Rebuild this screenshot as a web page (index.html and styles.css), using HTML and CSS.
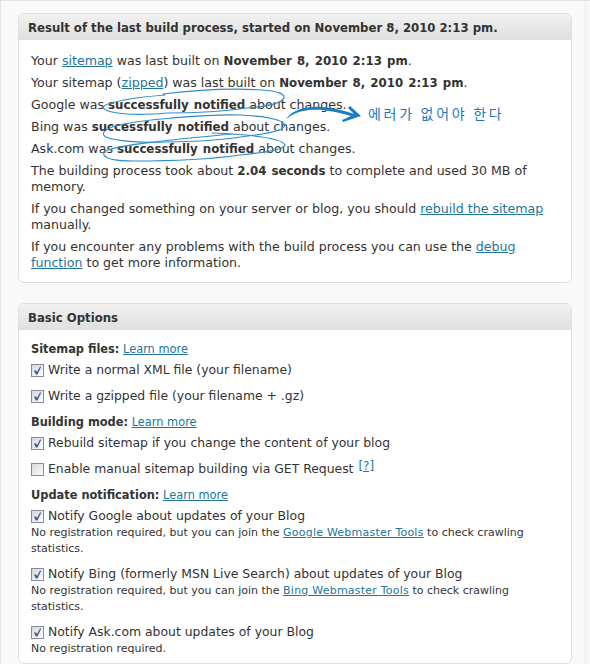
FILE: index.html
```html
<!DOCTYPE html>
<html lang="en">
<head>
<meta charset="utf-8">
<title>Sitemap options</title>
<link rel="stylesheet" href="styles.css">
</head>
<body>
<div class="page">
  <section class="panel">
    <h3 class="panel-title">Result of the last build process, started on November 8, 2010 2:13 pm.</h3>
    <div class="panel-body result">
      <p>Your <a href="#">sitemap</a> was last built on <b>November 8, 2010 2:13 pm</b>.</p>
      <p>Your sitemap (<a href="#">zipped</a>) was last built on <b>November 8, 2010 2:13 pm</b>.</p>
      <p>Google was <b>successfully notified</b> about changes.</p>
      <p>Bing was <b>successfully notified</b> about changes.</p>
      <p>Ask.com was <b>successfully notified</b> about changes.</p>
      <p>The building process took about <b>2.04 seconds</b> to complete and used 30 MB of memory.</p>
      <p>If you changed something on your server or blog, you should <a href="#">rebuild the sitemap</a> manually.</p>
      <p>If you encounter any problems with the build process you can use the <a href="#">debug function</a> to get more information.</p>
    </div>
  </section>
  <section class="panel">
    <h3 class="panel-title">Basic Options</h3>
    <div class="panel-body options">
      <h4 class="group"><b>Sitemap files:</b> <a href="#">Learn more</a></h4>
      <label class="opt"><input type="checkbox" checked>Write a normal XML file (your filename)</label>
      <label class="opt"><input type="checkbox" checked>Write a gzipped file (your filename + .gz)</label>
      <h4 class="group"><b>Building mode:</b> <a href="#">Learn more</a></h4>
      <label class="opt"><input type="checkbox" checked>Rebuild sitemap if you change the content of your blog</label>
      <label class="opt"><input type="checkbox">Enable manual sitemap building via GET Request <a href="#" class="help">[?]</a></label>
      <h4 class="group"><b>Update notification:</b> <a href="#">Learn more</a></h4>
      <label class="opt tight"><input type="checkbox" checked>Notify Google about updates of your Blog</label>
      <p class="note">No registration required, but you can join the <a href="#">Google Webmaster Tools</a> to check crawling statistics.</p>
      <label class="opt tight"><input type="checkbox" checked>Notify Bing (formerly MSN Live Search) about updates of your Blog</label>
      <p class="note">No registration required, but you can join the <a href="#">Bing Webmaster Tools</a> to check crawling statistics.</p>
      <label class="opt tight"><input type="checkbox" checked>Notify Ask.com about updates of your Blog</label>
      <p class="note">No registration required.</p>
    </div>
  </section>
</div>
<svg class="scribble" viewBox="0 0 590 664" aria-hidden="true">
  <g fill="none" stroke="#2f8ccb" stroke-width="1.2" stroke-linecap="round">
    <path d="M163 94 C195 90 235 88 262 90 C278 91 285 94 284 98 C281 104 262 107 247 108 C220 112 190 113 167 113 C145 115 125 115 112 112 C103 110 102 107 104 106 C110 102 130 98 165 95"/>
    <path d="M170 118 C195 116 220 114 240 115 C265 116 284 120 285 125 C285 130 270 133 255 135 C230 139 195 142 167 142 C140 143 115 141 106 137 C102 135 103 132 106 130 C115 124 140 120 200 116"/>
    <path d="M212 133 C245 134 283 138 285 145 C285 150 260 153 240 155 C205 160 165 161 133 161 C118 161 106 159 104 155 C103 152 105 151 108 150 C125 144 170 140 232 134"/>
  </g>
  <path class="arrow" d="M286 119 C293 109 308 106 322 107 C336 108 349 112 354 114 L348 108 L350 106 L361 116 L343 122 L342 120 L351 116 C341 113 332 111 322 110 C308 109 296 111 286 119 Z"/>
</svg>
<span class="handnote">에러가 없어야 한다</span>
</body>
</html>
```
FILE: styles.css
```css
html, body { margin: 0; padding: 0; }
body {
  width: 590px;
  height: 664px;
  overflow: hidden;
  position: relative;
  background: linear-gradient(to right, #f9f9f9 584px, #ececec 585px, #f6f6f6 586px);
  font-family: "DejaVu Sans", Verdana, sans-serif;
  font-size: 12.4px;
  color: #333;
  box-sizing: border-box;
  border-top: 1px solid #e4e4e4;
  border-left: 1px solid #e4e4e4;
}
a { color: #21759b; text-decoration: underline; }
b { color: #333; }
.page { padding: 12px 17px 0; display: flex; flex-direction: column; gap: 20px; margin-right: 1px; }
.panel {
  background: #fff;
  border: 1px solid #dfdfdf;
  border-radius: 6px;
  overflow: hidden;
}
.panel-title {
  margin: 0;
  height: 26px;
  line-height: 28px;
  padding-left: 9px;
  font-size: 11.7px;
  font-weight: bold;
  color: #333;
  background: linear-gradient(#f1f1f1, #dfdfdf);
}
.panel-body { padding: 13px 12px 5px; }
.result { font-size: 12.6px; }
.result b { font-size: 11.8px; word-spacing: 1px; }
.result p { margin: 0 0 6px; line-height: 16px; }
.options { padding-top: 11px; }
.group { margin: 0 0 5px; font-size: 11.4px; font-weight: normal; line-height: 16px; }
.opt { display: flex; align-items: center; line-height: 16px; margin-bottom: 10px; white-space: pre; }
.opt.tight { margin-bottom: 1px; }
.opt input {
  appearance: none;
  width: 13px;
  height: 13px;
  margin: 1px 4px 0 0;
  border: 1px solid #8a8a98;
  background: linear-gradient(135deg, #d6d6dc, #fff);
  position: relative;
  flex: none;
}
.opt input:checked::before {
  content: "";
  position: absolute;
  inset: 1px;
  background: #3f5c96;
  clip-path: polygon(10% 50%, 35% 50%, 45% 68%, 78% 5%, 92% 5%, 50% 95%, 32% 95%);
}
.help { font-size: 12px; margin-left: 1px; position: relative; top: -3px; }
.note { margin: 0 0 9px; font-size: 11px; line-height: 16px; }
.note a { letter-spacing: 0.22px; }
.note:last-child { margin-bottom: 1px; }
.scribble { position: absolute; left: -1px; top: -1px; width: 590px; height: 664px; pointer-events: none; }
.arrow { fill: #1b7cc0; }
.handnote {
  position: absolute;
  left: 367px;
  top: 102px;
  font-family: "Noto Sans CJK KR", sans-serif;
  font-size: 14px;
  font-weight: 400;
  color: #1a78bd;
  letter-spacing: 2.7px;
}
```
